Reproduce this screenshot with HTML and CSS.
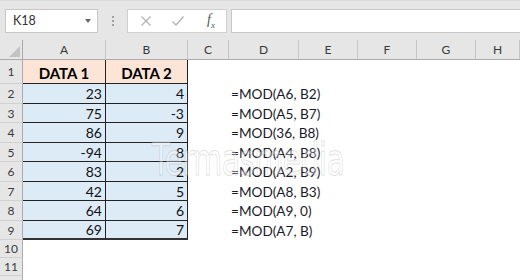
FILE: index.html
```html
<!DOCTYPE html>
<html>
<head>
    <title>MOD sheet</title>
    <link rel="stylesheet" href="styles.css">
</head>
<body>
<div class="formula-bar">
    <div class="name-box">
        <span>K18</span>
        <span class="caret"></span>
    </div>
    <div class="grip"><i></i><i></i><i></i></div>
    <div class="fx-buttons">
        <svg width="12" height="12" viewBox="0 0 12 12"><path d="M1.5 1.5 L10.5 10.5 M10.5 1.5 L1.5 10.5" stroke="#b4b4b4" stroke-width="1.3" fill="none"/></svg>
        <svg width="14" height="12" viewBox="0 0 14 12"><path d="M1.5 6.5 L5 10 L12.5 1.5" stroke="#b4b4b4" stroke-width="1.4" fill="none"/></svg>
        <span class="fx">f<sub>x</sub></span>
    </div>
    <div class="formula-input"></div>
</div>

<div class="sheet">
    <div class="corner"><span></span></div>
    <div class="col-head">A</div>
    <div class="col-head">B</div>
    <div class="col-head">C</div>
    <div class="col-head">D</div>
    <div class="col-head">E</div>
    <div class="col-head">F</div>
    <div class="col-head">G</div>
    <div class="col-head">H</div>

    <div class="row-head">1</div>
    <div class="cell title">DATA 1</div>
    <div class="cell title last">DATA 2</div>
    <div class="cell blank"></div>
    <div class="cell blank wide"></div>

    <div class="row-head">2</div>
    <div class="cell num">23</div>
    <div class="cell num last">4</div>
    <div class="cell blank"></div>
    <div class="cell formula">=MOD(A6, B2)</div>

    <div class="row-head">3</div>
    <div class="cell num">75</div>
    <div class="cell num last">-3</div>
    <div class="cell blank"></div>
    <div class="cell formula">=MOD(A5, B7)</div>

    <div class="row-head">4</div>
    <div class="cell num">86</div>
    <div class="cell num last">9</div>
    <div class="cell blank"></div>
    <div class="cell formula">=MOD(36, B8)</div>

    <div class="row-head">5</div>
    <div class="cell num">-94</div>
    <div class="cell num last">8</div>
    <div class="cell blank"></div>
    <div class="cell formula">=MOD(A4, B8)</div>

    <div class="row-head">6</div>
    <div class="cell num">83</div>
    <div class="cell num last">2</div>
    <div class="cell blank"></div>
    <div class="cell formula">=MOD(A2, B9)</div>

    <div class="row-head">7</div>
    <div class="cell num">42</div>
    <div class="cell num last">5</div>
    <div class="cell blank"></div>
    <div class="cell formula">=MOD(A8, B3)</div>

    <div class="row-head">8</div>
    <div class="cell num">64</div>
    <div class="cell num last">6</div>
    <div class="cell blank"></div>
    <div class="cell formula">=MOD(A9, 0)</div>

    <div class="row-head">9</div>
    <div class="cell num bottom">69</div>
    <div class="cell num last bottom">7</div>
    <div class="cell blank"></div>
    <div class="cell formula">=MOD(A7, B)</div>

    <div class="row-head">10</div>
    <div class="cell blank full"></div>

    <div class="row-head">11</div>
    <div class="cell blank full"></div>

    <div class="row-head"></div>
    <div class="cell blank full"></div>

    <div class="watermark">Termasmedia</div>
</div>
</body>
</html>
```

FILE: styles.css
```css
body {
    margin: 0;
    width: 520px;
    height: 280px;
    overflow: hidden;
    background-color: #fff;
    font-family: Lato, "Open Sans", sans-serif;
}

/* formula bar */
.formula-bar {
    display: flex;
    align-items: center;
    height: 40px;
    padding-left: 5px;
    background-color: #e6e6e6;
    border-top: 1px solid #dadada;
    box-sizing: border-box;
}
.name-box {
    display: flex;
    align-items: center;
    justify-content: space-between;
    width: 93px;
    height: 24px;
    padding: 0 6px 0 7px;
    box-sizing: border-box;
    background-color: #fff;
    border: 1px solid #c8c8c8;
    font-size: 12.5px;
    color: #333;
}
.caret {
    width: 0;
    height: 0;
    border-left: 3.5px solid transparent;
    border-right: 3.5px solid transparent;
    border-top: 4px solid #666;
}
.grip {
    display: flex;
    flex-direction: column;
    gap: 2px;
    width: 29px;
    align-items: center;
}
.grip i {
    width: 2px;
    height: 2px;
    background-color: #a0a0a0;
}
.fx-buttons {
    display: flex;
    align-items: center;
    width: 100px;
    height: 24px;
    box-sizing: border-box;
    background-color: #fff;
    border: 1px solid #d0d0d0;
    padding-left: 12px;
    gap: 19px;
}
.fx {
    font-family: "Liberation Serif", serif;
    font-style: italic;
    font-size: 14px;
    color: #555;
    margin-left: 3px;
}
.fx sub {
    font-size: 9px;
}
.formula-input {
    flex: 1;
    height: 24px;
    margin-left: 4px;
    box-sizing: border-box;
    background-color: #fff;
    border: 1px solid #c8c8c8;
    border-right: none;
}

/* sheet grid */
.sheet {
    position: relative;
    display: grid;
    grid-template-columns: 23px 83px 82px 41px 70px 59px 59px 59px 1fr;
    grid-template-rows: 20px 24px 20px 19px 20px 19px 20px 19px 20px 19px 18px 18px 18px;
}
.col-head {
    background-color: #e6e6e6;
    border-right: 1px solid #c6c6c6;
    border-bottom: 1px solid #ababab;
    font-size: 12px;
    color: #3a3a3a;
    display: flex;
    align-items: center;
    justify-content: center;
}
.col-head:last-of-type {
    border-right: none;
}
.corner {
    background-color: #e6e6e6;
    border-right: 1px solid #ababab;
    border-bottom: 1px solid #ababab;
    position: relative;
}
.corner span {
    position: absolute;
    right: 2px;
    bottom: 2px;
    width: 0;
    height: 0;
    border-left: 11px solid transparent;
    border-bottom: 11px solid #c3c3c3;
}
.row-head {
    grid-column: 1;
    background-color: #e6e6e6;
    border-right: 1px solid #ababab;
    border-bottom: 1px solid #d0d0d0;
    font-size: 12px;
    color: #3a3a3a;
    display: flex;
    align-items: center;
    justify-content: center;
}
.cell {
    display: flex;
    align-items: center;
    font-size: 14px;
    color: #111;
}
.title {
    justify-content: center;
    background-color: #fce4d6;
    font-weight: bold;
    font-size: 15px;
    color: #000;
    border-right: 1px solid #222;
    border-bottom: 1px solid #222;
    padding-top: 2px;
}
.num {
    justify-content: flex-end;
    padding-right: 3px;
    background-color: #ddebf7;
    border-right: 1px solid #222;
    border-bottom: 1px solid #222;
}
.bottom {
    border-bottom: 2px solid #333;
}
.blank {
    background-color: #fff;
}
.wide,
.formula {
    grid-column: 5 / -1;
}
.formula {
    padding-left: 2px;
    font-size: 13.6px;
    color: #1a1a2a;
}
.full {
    grid-column: 2 / -1;
}

.watermark {
    position: absolute;
    left: 152px;
    top: 94px;
    font-family: "DejaVu Sans", sans-serif;
    font-size: 44px;
    letter-spacing: -1px;
    transform: scaleX(0.68);
    transform-origin: left top;
    color: rgba(255, 255, 255, 0.35);
    -webkit-text-stroke: 1px rgba(150, 150, 150, 0.3);
    pointer-events: none;
}
```
